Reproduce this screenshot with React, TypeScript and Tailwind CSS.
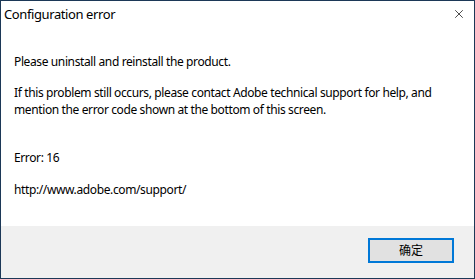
import { X } from 'lucide-react';

// Windows-style "Configuration error" message box with an OK (确定) button.
export default function App() {
  return (
    <div className="h-[279px] w-[475px] overflow-hidden bg-white">
      <div
        className="flex h-full flex-col border border-[#1c3857] bg-white text-black"
        style={{ fontFamily: '"Noto Sans", "Noto Sans CJK SC", sans-serif' }}
      >
        <div className="flex h-[29px] shrink-0 items-start justify-between">
          <span className="pl-[3px] pt-[3px] text-[13px] leading-[20px] tracking-[-0.4px]">
            Configuration error
          </span>
          <X className="mr-[8px] mt-[6px] h-[14px] w-[14px]" strokeWidth={1.2} />
        </div>
        <div className="flex flex-1 flex-col whitespace-nowrap px-[13px] pt-[23px] text-[12px] leading-[17px] tracking-[-0.38px]">
          <p>Please uninstall and reinstall the product.</p>
          <p className="mt-[14px]">
            If this problem still occurs, please contact Adobe technical support for help, and
            <br />
            mention the error code shown at the bottom of this screen.
          </p>
          <p className="mt-[31px]">Error: 16</p>
          <p className="mt-[15px]">http://www.adobe.com/support/</p>
        </div>
        <div className="flex h-[52px] shrink-0 items-start justify-end bg-[#f0f0f0] pr-[20px] pt-[12px]">
          <button className="flex h-[25px] w-[86px] items-center justify-center border-2 border-[#0078d7] bg-[#e1e1e1] text-[12px] leading-none">
            确定
          </button>
        </div>
      </div>
    </div>
  );
}
